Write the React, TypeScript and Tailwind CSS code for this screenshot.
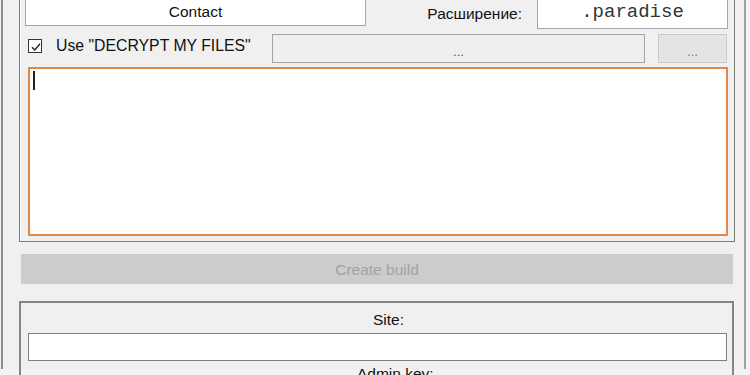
/**
 * BuilderForm — ransomware-builder style WinForms dialog, lower half:
 * contact / extension row, note options, note editor and site settings.
 */

function CheckMark() {
  return (
    <svg viewBox="0 0 14 14" className="h-[14px] w-[14px]">
      <path d="M3 7.2 L5.8 10 L11 3.8" fill="none" stroke="#222" strokeWidth="1.4" />
    </svg>
  );
}

export default function App() {
  return (
    <div className="h-[375px] w-[750px] overflow-hidden bg-[#f3f3f3] font-['Liberation_Sans',Arial,sans-serif] text-[15px] leading-[17px] text-[#111]">
      <div className="ml-px h-full w-[745px] border-x-2 border-l-[#8d8d8d] border-r-[#a2a2a2] bg-[#f0f0f0]">
        {/* note group */}
        <div className="-mt-[6px] ml-[16px] w-[716px] border border-[#7e7e7e] pb-[5px] shadow-[inset_1px_1px_0_#ffffff]">
          <div className="flex h-[34px] items-start">
            <div className="ml-[5px] flex h-[31px] w-[341px] items-end justify-center border border-[#a6a6a6] bg-white pb-[5px] text-[15.5px]">
              Contact
            </div>
            <span className="ml-auto mt-[10px] text-[15.5px]">Расширение:</span>
            <div className="ml-[15px] mr-[6px] flex h-[34px] w-[191px] items-end justify-center border border-[#a6a6a6] bg-white pb-[6px] font-['Liberation_Mono','Courier_New',monospace] text-[19px] leading-[20px] text-[#333]">
              .paradise
            </div>
          </div>

          <div className="mt-[5px] flex h-[29px] items-start">
            <div className="ml-[8px] flex w-[244px] items-center gap-[14px] pt-[4px]">
              <div className="h-[14px] w-[14px] shrink-0 border border-[#333] bg-white">
                <CheckMark />
              </div>
              <span className="-mt-px text-[15.8px]">Use "DECRYPT MY FILES"</span>
            </div>
            <div className="flex h-[29px] w-[373px] items-end justify-center border border-[#a4a4a4] bg-[#efefef] pb-[4px] text-[13px] leading-[12px] text-[#555]">
              ...
            </div>
            <div className="ml-[13px] flex h-[29px] w-[69px] items-end justify-center border border-[#c8c8c8] bg-[#e4e4e4] pb-[4px] text-[13px] leading-[12px] text-[#777]">
              ...
            </div>
          </div>

          <div className="ml-[8px] mt-[4px] h-[169px] w-[700px] border-2 border-[#e3864c] bg-white pl-[3px] pt-[2px]">
            <div className="h-[19px] w-[2px] bg-[#222]" />
          </div>
        </div>

        <div className="ml-[18px] mt-[12px] flex h-[30px] w-[712px] items-center justify-center bg-[#cccccc] text-[15.5px] text-[#a2a2a2]">
          Create build
        </div>

        {/* site group */}
        <div className="ml-[16px] mt-[17px] w-[715px] border-2 border-[#858585] pt-[8px]">
          <div className="pl-[352px] text-[15.5px]">Site:</div>
          <div className="ml-[7px] mt-[5px] h-[28px] w-[699px] border border-[#7f7f7f] bg-white" />
          <div className="mt-[4px] pl-[336px] text-[15.5px]">Admin key:</div>
        </div>
      </div>
    </div>
  );
}
